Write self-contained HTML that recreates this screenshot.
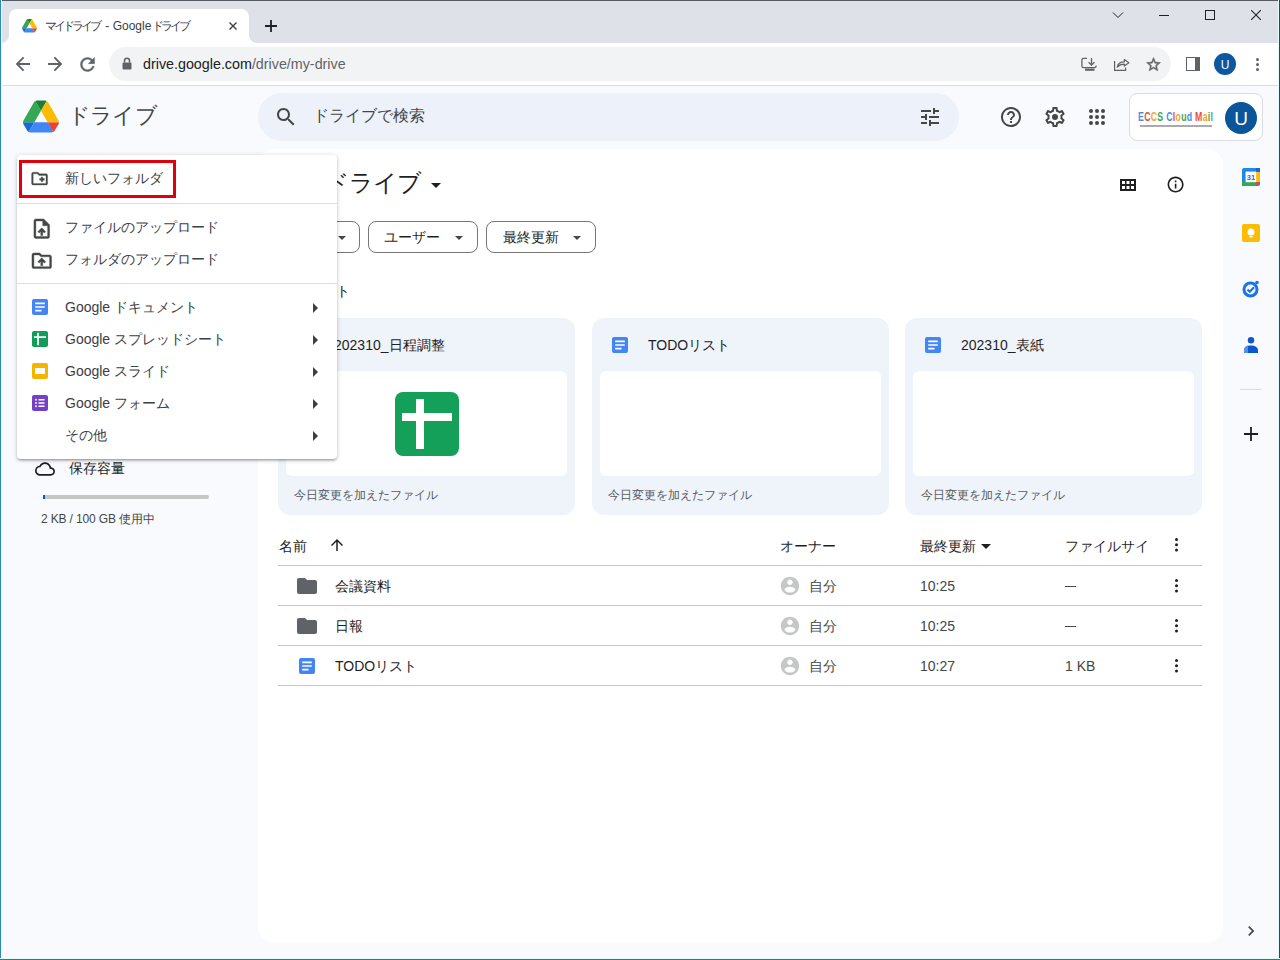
<!DOCTYPE html>
<html lang="ja"><head><meta charset="utf-8">
<style>
*{box-sizing:border-box;margin:0;padding:0}
html,body{width:1280px;height:960px;overflow:hidden;background:#f8fafd;font-family:"Liberation Sans",sans-serif;color:#1f1f1f}
.a{position:absolute}
svg{display:block;position:absolute}
.t{position:absolute;white-space:nowrap;line-height:1}
#tabstrip{left:0;top:0;width:1280px;height:43px;background:#dee1e8}
#tab{left:9px;top:9px;width:240px;height:34px;background:#fff;border-radius:8px 8px 0 0}
#toolbar{left:0;top:43px;width:1280px;height:42px;background:#fff}
#tbline{left:0;top:85px;width:1280px;height:1px;background:#dadce0}
#omni{left:109px;top:47px;width:1062px;height:34px;border-radius:17px;background:#f1f3f4}
#bl{left:0;top:0;width:1px;height:960px;background:#2a8db0;box-shadow:1px 0 0 #e4fcfd}
#br{left:1279px;top:0;width:1px;height:960px;background:#13489a;box-shadow:-1px 0 0 #e4fcfd}
#bb{left:0;top:959px;width:1280px;height:1px;background:#1b7ea6;box-shadow:0 -1px 0 #e0fdfd}
#bt{left:0;top:0;width:1280px;height:1px;background:#555a60}
#main{left:258px;top:149px;width:965px;height:794px;background:#fff;border-radius:16px}
#search{left:258px;top:93px;width:701px;height:48px;border-radius:24px;background:#ecf1fa}
.card{position:absolute;top:318px;width:297px;height:197px;background:#eff3fa;border-radius:12px}
.prev{position:absolute;left:8px;top:53px;right:8px;height:105px;background:#fff;border-radius:6px}
.chip{position:absolute;top:221px;height:32px;border:1px solid #747775;border-radius:8px;background:#fff}
.hl{position:absolute;left:278px;width:924px;height:1px;background:#c7c7c7}
#menu{left:17px;top:155px;width:320px;height:304px;background:#fff;border-radius:4px;box-shadow:0 2px 2px 0 rgba(0,0,0,.14),0 3px 1px -2px rgba(0,0,0,.12),0 1px 5px 0 rgba(0,0,0,.2)}
.mdiv{position:absolute;left:0;width:320px;height:1px;background:#dadce0}
.mt{position:absolute;left:48px;font-size:14px;color:#3c4043;white-space:nowrap;line-height:1}
.arr{position:absolute;left:296px;width:0;height:0;border-top:5px solid transparent;border-bottom:5px solid transparent;border-left:5px solid #3c4043}
</style></head><body>
<!-- browser chrome -->
<div class="a" id="tabstrip"></div>
<div class="a" id="tab"></div>
<div class="a" style="left:249px;top:35px;width:8px;height:8px;background:radial-gradient(circle at 100% 0,#dee1e8 7.5px,#fff 8.5px)"></div>
<div class="a" style="left:1px;top:35px;width:8px;height:8px;background:radial-gradient(circle at 0 0,#dee1e8 7.5px,#fff 8.5px)"></div>
<div class="a" id="toolbar"></div>
<div class="a" id="tbline"></div>
<div class="a" id="omni"></div>

<!-- tab favicon -->
<svg style="left:21.5px;top:19px" width="15" height="13.5" viewBox="0 0 87.3 78"><path d="m6.6 66.85 3.85 6.65c.8 1.4 1.95 2.5 3.3 3.3l13.75-23.8h-27.5c0 1.550.4 3.1 1.2 4.5z" fill="#1967d2"/><path d="m43.65 25-13.75-23.8c-1.35.8-2.5 1.9-3.3 3.3l-25.4 44a9.06 9.06 0 0 0 -1.2 4.5h27.5z" fill="#34a853"/><path d="m73.55 76.8c1.35-.8 2.5-1.9 3.3-3.3l1.6-2.75 7.65-13.25c.8-1.4 1.2-2.95 1.2-4.5h-27.502l5.852 11.5z" fill="#ea4335"/><path d="m43.65 25 13.75-23.8c-1.35-.8-2.9-1.2-4.5-1.2h-18.5c-1.6 0-3.15.45-4.5 1.2z" fill="#188038"/><path d="m59.8 53h-32.3l-13.75 23.8c1.35.8 2.9 1.2 4.5 1.2h50.8c1.6 0 3.150-.45 4.5-1.2z" fill="#4285f4"/><path d="m73.4 26.5-12.7-22c-.8-1.4-1.95-2.5-3.3-3.3l-13.75 23.8 16.15 28h27.45c0-1.55-.4-3.1-1.2-4.5z" fill="#fbbc04"/></svg>
<div class="t" id="tabtitle" style="left:45px;top:20px;font-size:12px;color:#3c4043"><span style="letter-spacing:-3px">マイドライ</span>ブ - Google<span style="margin-left:1px;letter-spacing:-3px">ドライブ</span></div>
<svg style="left:229px;top:22px" width="8" height="8" viewBox="0 0 8 8"><path d="M0.5 0.5L7.5 7.5M7.5 0.5L0.5 7.5" stroke="#3c4043" stroke-width="1.4"/></svg>
<svg style="left:265px;top:20px" width="12" height="12" viewBox="0 0 12 12"><path d="M6 0V12M0 6H12" stroke="#202124" stroke-width="1.8"/></svg>
<!-- window controls -->
<svg style="left:1112px;top:11px" width="12" height="8" viewBox="0 0 12 8"><path d="M1 1.5L6 6.5L11 1.5" stroke="#202124" stroke-width="1" fill="none"/></svg>
<div class="a" style="left:1159px;top:15px;width:10px;height:1px;background:#202124"></div>
<div class="a" style="left:1205px;top:10px;width:10px;height:10px;border:1px solid #202124"></div>
<svg style="left:1251px;top:10px" width="10" height="10" viewBox="0 0 10 10"><path d="M0 0L10 10M10 0L0 10" stroke="#202124" stroke-width="1.1"/></svg>
<!-- nav -->
<svg style="left:0;top:43px" width="40" height="42" viewBox="0 43 40 42"><path d="M30 64H17.5M23.6 57.4L17 64l6.6 6.6" stroke="#5f6368" stroke-width="1.9" fill="none"/></svg>
<svg style="left:40px;top:43px" width="30" height="42" viewBox="40 43 30 42"><path d="M48 64H60.5M54.4 57.4L61 64l-6.6 6.6" stroke="#5f6368" stroke-width="1.9" fill="none"/></svg>
<svg style="left:76.5px;top:54px" width="21" height="21" viewBox="0 0 24 24"><path fill="#5f6368" stroke="#5f6368" stroke-width="0.5" d="M17.65 6.35C16.2 4.9 14.21 4 12 4c-4.42 0-7.99 3.58-7.99 8s3.570 8 7.99 8c3.73 0 6.84-2.55 7.73-6h-2.08c-.82 2.33-3.04 4-5.65 4-3.31 0-6-2.69-6-6s2.69-6 6-6c1.66 0 3.14.69 4.22 1.78L13 11h7V4l-2.35 2.35z"/></svg>
<!-- lock -->
<svg style="left:122px;top:57px" width="10" height="13" viewBox="0 0 10 13"><path d="M2.5 5.5V3.8a2.5 2.5 0 0 1 5 0V5.5" stroke="#5f6368" stroke-width="1.5" fill="none"/><rect x="0.5" y="5.5" width="9" height="7" rx="1" fill="#5f6368"/></svg>
<div class="t" style="left:143px;top:57px;font-size:14.3px;color:#202124">drive.google.com<span style="color:#5f6368">/drive/my-drive</span></div>
<!-- right toolbar icons -->
<svg style="left:1075px;top:50px" width="30" height="28" viewBox="1075 50 30 28"><path d="M1087 58.3H1083.5a1.6 1.6 0 0 0-1.6 1.6V66a1.6 1.6 0 0 0 1.6 1.6H1094.5a1.6 1.6 0 0 0 1.6-1.6V65.5" stroke="#5f6368" stroke-width="1.3" fill="none"/><path d="M1091.5 58V65M1088.6 62.2L1091.5 65.1L1094.4 62.2" stroke="#5f6368" stroke-width="1.3" fill="none"/><rect x="1085" y="68.6" width="9.5" height="2.2" fill="#5f6368"/></svg>
<svg style="left:1105px;top:50px" width="30" height="28" viewBox="1105 50 30 28"><path d="M1114.6 61V70.4H1125.6V67.5" stroke="#5f6368" stroke-width="1.2" fill="none"/><path d="M1117.3 67.2C1117.8 63.5 1120.6 61.8 1124.3 61.8V59.5L1128.9 62.8L1124.3 66.1V64.2C1121.4 64.2 1119 65.3 1117.3 67.2Z" stroke="#5f6368" stroke-width="1.2" fill="none" stroke-linejoin="round"/></svg>
<svg style="left:1144.6px;top:56px" width="17" height="17" viewBox="0 0 24 24"><path fill="#5f6368" stroke="#5f6368" stroke-width="0.6" d="M22 9.24l-7.19-.62L12 2 9.19 8.63 2 9.24l5.46 4.73L5.82 21 12 17.27 18.18 21l-1.63-7.03L22 9.24zM12 15.4l-3.76 2.27 1-4.28-3.32-2.88 4.38-.38L12 6.1l1.71 4.04 4.38.38-3.32 2.88 1 4.28L12 15.4z"/></svg>
<div class="a" style="left:1186px;top:57px;width:14px;height:14px;border:1.7px solid #5f6368;border-right:5px solid #5f6368"></div>
<div class="a" style="left:1214px;top:53px;width:22px;height:22px;border-radius:50%;background:#0b57a0"></div>
<div class="t" style="left:1214px;top:59px;width:22px;text-align:center;font-size:12px;color:#fff">U</div>
<div class="a" style="left:1256px;top:58px;width:3.2px;height:3.2px;border-radius:50%;background:#5f6368"></div>
<div class="a" style="left:1256px;top:63px;width:3.2px;height:3.2px;border-radius:50%;background:#5f6368"></div>
<div class="a" style="left:1256px;top:68px;width:3.2px;height:3.2px;border-radius:50%;background:#5f6368"></div>

<!-- drive app -->

<!-- drive logo -->
<svg style="left:23px;top:100px" width="36" height="33" viewBox="0 0 87.3 78"><path d="m6.6 66.85 3.85 6.65c.8 1.4 1.95 2.5 3.3 3.3l13.75-23.8h-27.5c0 1.550.4 3.1 1.2 4.5z" fill="#1967d2"/><path d="m43.65 25-13.75-23.8c-1.35.8-2.5 1.9-3.3 3.3l-25.4 44a9.06 9.06 0 0 0 -1.2 4.5h27.5z" fill="#34a853"/><path d="m73.55 76.8c1.35-.8 2.5-1.9 3.3-3.3l1.6-2.75 7.65-13.25c.8-1.4 1.2-2.95 1.2-4.5h-27.502l5.852 11.5z" fill="#ea4335"/><path d="m43.65 25 13.75-23.8c-1.35-.8-2.9-1.2-4.5-1.2h-18.5c-1.6 0-3.15.45-4.5 1.2z" fill="#188038"/><path d="m59.8 53h-32.3l-13.75 23.8c1.35.8 2.9 1.2 4.5 1.2h50.8c1.6 0 3.150-.45 4.5-1.2z" fill="#4285f4"/><path d="m73.4 26.5-12.7-22c-.8-1.4-1.95-2.5-3.3-3.3l-13.75 23.8 16.15 28h27.45c0-1.55-.4-3.1-1.2-4.5z" fill="#fbbc04"/></svg>
<div class="t" style="left:68px;top:105px;font-size:22px;color:#444746;letter-spacing:-0.8px">ドライブ</div>
<div class="a" id="search"></div>
<svg style="left:274px;top:105px" width="24" height="24" viewBox="0 0 24 24"><path fill="#444746" d="M15.5 14h-.79l-.28-.27C15.41 12.59 16 11.11 16 9.5 16 5.91 13.09 3 9.5 3S3 5.910 3 9.5 5.91 16 9.5 16c1.61 0 3.09-.59 4.23-1.57l.27.28v.79l5 4.99L20.49 19l-4.99-5zm-6 0C7.01 14 5 11.99 5 9.5S7.01 5 9.5 5 14 7.01 14 9.5 11.99 14 9.5 14z"/></svg>
<div class="t" style="left:313px;top:108px;font-size:16px;color:#444746">ドライブで検索</div>
<svg style="left:918px;top:105px" width="24" height="24" viewBox="0 0 24 24"><path fill="#444746" d="M3 17v2h6v-2H3zM3 5v2h10V5H3zm10 16v-2h8v-2h-8v-2h-2v6h2zM7 9v2H3v2h4v2h2V9H7zm14 4v-2H11v2h10zm-6-4h2V7h4V5h-4V3h-2v6z"/></svg>
<svg style="left:999px;top:105px" width="24" height="24" viewBox="0 0 24 24"><path fill="#444746" d="M11 18h2v-2h-2v2zm1-16C6.48 2 2 6.48 2 12s4.48 10 10 10 10-4.48 10-10S17.52 2 12 2zm0 18c-4.41 0-8-3.59-8-8s3.59-8 8-8 8 3.59 8 8-3.59 8-8 8zm0-14c-2.21 0-4 1.79-4 4h2c0-1.1.9-2 2-2s2 .9 2 2c0 2-3 1.75-3 5h2c0-2.25 3-2.5 3-5 0-2.21-1.79-4-4-4z"/></svg>
<svg style="left:1043px;top:105px" width="24" height="24" viewBox="0 0 24 24"><path fill="#444746" d="M19.43 12.98c.04-.32.07-.64.07-.98 0-.34-.03-.66-.07-.98l2.11-1.65c.19-.15.24-.42.12-.64l-2-3.46c-.09-.16-.26-.25-.44-.25-.06 0-.12.01-.17.03l-2.49 1c-.52-.4-1.08-.73-1.69-.98l-.38-2.65C14.46 2.18 14.25 2 14 2h-4c-.25 0-.46.18-.49.42l-.38 2.65c-.61.25-1.17.59-1.690.98l-2.49-1c-.06-.02-.12-.03-.18-.03-.17 0-.34.09-.43.25l-2 3.46c-.13.22-.07.49.12.64l2.11 1.65c-.04.32-.07.65-.07.98 0 .33.03.66.07.98l-2.11 1.65c-.19.15-.24.42-.12.64l2 3.46c.09.16.26.25.44.25.06 0 .12-.01.17-.03l2.49-1c.52.4 1.08.73 1.69.98l.38 2.65c.03.24.24.42.49.42h4c.25 0 .46-.18.49-.42l.38-2.65c.61-.25 1.17-.59 1.69-.98l2.49 1c.06.02.12.03.18.03.17 0 .34-.09.43-.25l2-3.46c.12-.22.07-.49-.12-.64l-2.11-1.65zm-1.98-1.71c.04.31.05.52.05.73 0 .21-.02.43-.05.73l-.14 1.13.89.7 1.08.84-.7 1.21-1.27-.51-1.04-.42-.9.68c-.43.32-.84.56-1.25.73l-1.06.43-.16 1.13-.2 1.35h-1.4l-.19-1.35-.16-1.13-1.06-.43c-.43-.18-.83-.41-1.23-.71l-.91-.7-1.06.43-1.27.51-.7-1.21 1.08-.84.89-.7-.14-1.13c-.03-.31-.05-.54-.05-.74s.02-.43.05-.73l.14-1.13-.89-.7-1.08-.84.7-1.21 1.27.51 1.04.42.9-.68c.43-.32.84-.56 1.25-.73l1.06-.43.16-1.13.2-1.35h1.39l.19 1.35.16 1.13 1.06.43c.43.18.83.41 1.23.71l.91.7 1.06-.43 1.27-.51.7 1.21-1.07.85-.89.7.14 1.13z"/><circle cx="12" cy="12" r="3" fill="#444746"/></svg>
<svg style="left:1089px;top:109px" width="16" height="16" viewBox="0 0 16 16" fill="#444746"><circle cx="2" cy="2" r="2"/><circle cx="8" cy="2" r="2"/><circle cx="14" cy="2" r="2"/><circle cx="2" cy="8" r="2"/><circle cx="8" cy="8" r="2"/><circle cx="14" cy="8" r="2"/><circle cx="2" cy="14" r="2"/><circle cx="8" cy="14" r="2"/><circle cx="14" cy="14" r="2"/></svg>
<!-- ECCS box -->
<div class="a" style="left:1129px;top:93px;width:134px;height:48px;border:1px solid #dadce0;border-radius:8px;background:#fff"></div>
<div class="t" style="left:1138px;top:111px;font-size:12.5px;font-weight:bold;letter-spacing:0.4px;transform:scaleX(0.7);transform-origin:0 0"><span style="color:#4a90e2">E</span><span style="color:#e94e3c">C</span><span style="color:#f5a623">C</span><span style="color:#34a853">S</span> <span style="color:#4a90e2">C</span><span style="color:#e94e3c">l</span><span style="color:#f5a623">o</span><span style="color:#34a853">u</span><span style="color:#4a90e2">d</span> <span style="color:#e94e3c">M</span><span style="color:#f5a623">a</span><span style="color:#34a853">i</span><span style="color:#4a90e2">l</span></div>
<div class="a" style="left:1140px;top:124.5px;width:72px;height:2px;background:#555;opacity:.5"></div>
<div class="a" style="left:1225px;top:102px;width:32px;height:32px;border-radius:50%;background:#0b559b"></div>
<div class="t" style="left:1225px;top:109px;width:32px;text-align:center;font-size:19px;color:#fff">U</div>
<div class="a" id="main"></div>


<!-- main heading -->
<div class="t" style="left:277px;top:171px;font-size:24px;color:#1f1f1f;letter-spacing:-1px">マイドライブ</div>
<div class="a" style="left:431px;top:183px;width:0;height:0;border-left:5px solid transparent;border-right:5px solid transparent;border-top:5px solid #1f1f1f"></div>
<svg style="left:1116px;top:173px" width="24" height="24" viewBox="0 0 24 24"><path fill="#1f1f1f" d="M4 6h16v12H4z M6 8v3h3V8z M10.5 8v3h3V8z M15 8v3h3V8z M6 13v3h3v-3z M10.5 13v3h3v-3z M15 13v3h3v-3z" fill-rule="evenodd"/></svg>
<svg style="left:1166.4px;top:175.3px" width="19.2" height="19.2" viewBox="0 0 24 24"><path fill="#1f1f1f" d="M11 7h2v2h-2zm0 4h2v6h-2zm1-9C6.48 2 2 6.48 2 12s4.48 10 10 10 10-4.48 10-10S17.52 2 12 2zm0 18c-4.41 0-8-3.59-8-8s3.59-8 8-8 8 3.59 8 8-3.59 8-8 8z"/></svg>
<!-- chips -->
<div class="chip" style="left:278px;width:82px"><div class="t" style="left:16px;top:8px;font-size:14px;color:#1f1f1f">種類</div><div class="a" style="left:59px;top:14px;border-left:4px solid transparent;border-right:4px solid transparent;border-top:4px solid #444746"></div></div>
<div class="chip" style="left:368px;width:110px"><div class="t" style="left:15px;top:8px;font-size:14px;color:#1f1f1f">ユーザー</div><div class="a" style="left:86px;top:14px;border-left:4px solid transparent;border-right:4px solid transparent;border-top:4px solid #444746"></div></div>
<div class="chip" style="left:486px;width:110px"><div class="t" style="left:16px;top:8px;font-size:14px;color:#1f1f1f">最終更新</div><div class="a" style="left:86px;top:14px;border-left:4px solid transparent;border-right:4px solid transparent;border-top:4px solid #444746"></div></div>
<div class="t" style="left:336px;top:284px;font-size:14px;color:#1f1f1f">ト</div>
<!-- cards -->
<div class="card" style="left:278px"><div class="prev"></div>
 <svg style="left:16px;top:19px" width="16" height="16" viewBox="0 0 16 16"><rect width="16" height="16" rx="2" fill="#0f9d58"/><path d="M2 6.2H14M6 1.8V14.2" stroke="#fff" stroke-width="1.8"/></svg>
 <div class="t" style="left:56px;top:20px;font-size:14px;color:#1f1f1f">202310_日程調整</div>
 <div class="a" style="left:117px;top:74px;width:64px;height:64px;border-radius:8px;background:#15a05a"></div>
 <div class="a" style="left:138px;top:81px;width:8px;height:50px;background:#fff"></div>
 <div class="a" style="left:124px;top:95px;width:50px;height:8px;background:#fff"></div>
 <div class="t" style="left:16px;top:171px;font-size:12px;color:#575b5f">今日変更を加えたファイル</div>
</div>
<div class="card" style="left:592px"><div class="prev"></div>
 <svg style="left:20px;top:19px" width="16" height="16" viewBox="0 0 16 16"><rect width="16" height="16" rx="2" fill="#4285f4"/><path d="M3.2 4.3H12.8M3.2 8H12.8M3.2 11.7H9.5" stroke="#fff" stroke-width="1.7"/></svg>
 <div class="t" style="left:56px;top:20px;font-size:14px;color:#1f1f1f">TODOリスト</div>
 <div class="t" style="left:16px;top:171px;font-size:12px;color:#575b5f">今日変更を加えたファイル</div>
</div>
<div class="card" style="left:905px"><div class="prev"></div>
 <svg style="left:20px;top:19px" width="16" height="16" viewBox="0 0 16 16"><rect width="16" height="16" rx="2" fill="#4285f4"/><path d="M3.2 4.3H12.8M3.2 8H12.8M3.2 11.7H9.5" stroke="#fff" stroke-width="1.7"/></svg>
 <div class="t" style="left:56px;top:20px;font-size:14px;color:#1f1f1f">202310_表紙</div>
 <div class="t" style="left:16px;top:171px;font-size:12px;color:#575b5f">今日変更を加えたファイル</div>
</div>
<!-- list -->
<div class="t" style="left:279px;top:539px;font-size:14px;color:#1f1f1f">名前</div>
<svg style="left:328px;top:536px" width="18" height="18" viewBox="0 0 24 24"><path fill="#1f1f1f" d="M4 12l1.41 1.41L11 7.83V20h2V7.83l5.58 5.59L20 12l-8-8-8 8z"/></svg>
<div class="t" style="left:780px;top:539px;font-size:14px;color:#1f1f1f">オーナー</div>
<div class="t" style="left:920px;top:539px;font-size:14px;color:#1f1f1f">最終更新</div>
<div class="a" style="left:981px;top:544px;border-left:5px solid transparent;border-right:5px solid transparent;border-top:5px solid #1f1f1f"></div>
<div class="t" style="left:1065px;top:539px;font-size:14px;color:#1f1f1f">ファイルサイ</div>
<div class="a" style="left:1174.5px;top:538.2px;width:3.2px;height:3.2px;border-radius:50%;background:#1f1f1f;box-shadow:0 5.25px 0 #1f1f1f,0 10.5px 0 #1f1f1f"></div>
<div class="hl" style="top:565px"></div>
<div class="hl" style="top:605px"></div>
<div class="hl" style="top:645px"></div>
<div class="hl" style="top:685px"></div>
<svg style="left:295px;top:574px" width="24" height="24" viewBox="0 0 24 24"><path fill="#5f6368" d="M10 4H4c-1.1 0-1.99.9-1.99 2L2 18c0 1.1.9 2 2 2h16c1.1 0 2-.9 2-2V8c0-1.1-.9-2-2-2h-8l-2-2z"/></svg>
<div class="t" style="left:335px;top:579px;font-size:14px;color:#1f1f1f">会議資料</div>
<svg style="left:779.2px;top:575.2px" width="22" height="22" viewBox="0 0 24 24"><path fill="#c4c7c5" d="M12 2C6.48 2 2 6.48 2 12s4.48 10 10 10 10-4.48 10-10S17.52 2 12 2zm0 3c1.66 0 3 1.34 3 3s-1.34 3-3 3-3-1.34-3-3 1.34-3 3-3zm0 14.2c-2.5 0-4.71-1.28-6-3.22.03-1.990 4-3.08 6-3.08 1.99 0 5.97 1.09 6 3.08-1.29 1.94-3.5 3.22-6 3.22z"/></svg>
<div class="t" style="left:809px;top:579px;font-size:14px;color:#444746">自分</div>
<div class="t" style="left:920px;top:579px;font-size:14px;color:#444746">10:25</div>
<div class="t" style="left:1065px;top:579px;font-size:14px;color:#444746"><span style="display:inline-block;width:11px;height:1.3px;background:#444746;vertical-align:middle;position:relative;top:-1px"></span></div>
<div class="a" style="left:1174.5px;top:579.1px;width:3.2px;height:3.2px;border-radius:50%;background:#1f1f1f;box-shadow:0 5.25px 0 #1f1f1f,0 10.5px 0 #1f1f1f"></div>
<svg style="left:295px;top:614px" width="24" height="24" viewBox="0 0 24 24"><path fill="#5f6368" d="M10 4H4c-1.1 0-1.99.9-1.99 2L2 18c0 1.1.9 2 2 2h16c1.1 0 2-.9 2-2V8c0-1.1-.9-2-2-2h-8l-2-2z"/></svg>
<div class="t" style="left:335px;top:619px;font-size:14px;color:#1f1f1f">日報</div>
<svg style="left:779.2px;top:615.2px" width="22" height="22" viewBox="0 0 24 24"><path fill="#c4c7c5" d="M12 2C6.48 2 2 6.48 2 12s4.48 10 10 10 10-4.48 10-10S17.52 2 12 2zm0 3c1.66 0 3 1.34 3 3s-1.34 3-3 3-3-1.34-3-3 1.34-3 3-3zm0 14.2c-2.5 0-4.71-1.28-6-3.22.03-1.990 4-3.08 6-3.08 1.99 0 5.97 1.09 6 3.08-1.29 1.94-3.5 3.22-6 3.22z"/></svg>
<div class="t" style="left:809px;top:619px;font-size:14px;color:#444746">自分</div>
<div class="t" style="left:920px;top:619px;font-size:14px;color:#444746">10:25</div>
<div class="t" style="left:1065px;top:619px;font-size:14px;color:#444746"><span style="display:inline-block;width:11px;height:1.3px;background:#444746;vertical-align:middle;position:relative;top:-1px"></span></div>
<div class="a" style="left:1174.5px;top:619.1px;width:3.2px;height:3.2px;border-radius:50%;background:#1f1f1f;box-shadow:0 5.25px 0 #1f1f1f,0 10.5px 0 #1f1f1f"></div>
<svg style="left:299px;top:658px" width="16" height="16" viewBox="0 0 16 16"><rect width="16" height="16" rx="2" fill="#4285f4"/><path d="M3.2 4.3H12.8M3.2 8H12.8M3.2 11.7H9.5" stroke="#fff" stroke-width="1.7"/></svg>
<div class="t" style="left:335px;top:659px;font-size:14px;color:#1f1f1f">TODOリスト</div>
<svg style="left:779.2px;top:655.2px" width="22" height="22" viewBox="0 0 24 24"><path fill="#c4c7c5" d="M12 2C6.48 2 2 6.48 2 12s4.48 10 10 10 10-4.48 10-10S17.52 2 12 2zm0 3c1.66 0 3 1.34 3 3s-1.34 3-3 3-3-1.34-3-3 1.34-3 3-3zm0 14.2c-2.5 0-4.71-1.28-6-3.22.03-1.990 4-3.08 6-3.08 1.99 0 5.97 1.09 6 3.08-1.29 1.94-3.5 3.22-6 3.22z"/></svg>
<div class="t" style="left:809px;top:659px;font-size:14px;color:#444746">自分</div>
<div class="t" style="left:920px;top:659px;font-size:14px;color:#444746">10:27</div>
<div class="t" style="left:1065px;top:659px;font-size:14px;color:#444746">1 KB</div>
<div class="a" style="left:1174.5px;top:659.1px;width:3.2px;height:3.2px;border-radius:50%;background:#1f1f1f;box-shadow:0 5.25px 0 #1f1f1f,0 10.5px 0 #1f1f1f"></div>

<svg style="left:35px;top:459px" width="20" height="20" viewBox="0 0 24 24"><path fill="#1f1f1f" d="M19.35 10.04C18.67 6.59 15.64 4 12 4 9.11 4 6.6 5.64 5.35 8.04 2.34 8.36 0 10.91 0 14c0 3.31 2.69 6 6 6h13c2.76 0 5-2.24 5-5 0-2.64-2.05-4.78-4.65-4.96zM19 18H6c-2.21 0-4-1.79-4-4 0-2.05 1.53-3.76 3.56-3.97l1.07-.11.5-.95C8.08 7.14 9.94 6 12 6c2.62 0 4.88 1.86 5.39 4.43l.3 1.5 1.53.11c1.56.1 2.78 1.41 2.78 2.96 0 1.65-1.35 3-3 3z"/></svg>
<div class="t" style="left:69px;top:461px;font-size:14px;color:#1f1f1f">保存容量</div>
<div class="a" style="left:43px;top:495px;width:166px;height:4px;border-radius:2px;background:#c4c7c5"></div>
<div class="a" style="left:43px;top:495px;width:1.5px;height:4px;background:#0b57d0"></div>
<div class="t" style="left:41px;top:513px;font-size:12px;color:#444746;letter-spacing:-0.15px">2 KB / 100 GB 使用中</div>
<!-- right side panel -->
<svg style="left:1242px;top:168px" width="18" height="18" viewBox="0 0 18 18"><rect x="0" y="0" width="18" height="18" rx="2" fill="#1e88e5"/><rect x="0" y="14" width="14" height="4" fill="#34a853"/><rect x="14" y="4" width="4" height="10" fill="#fbbc04"/><path d="M14 14h4l-4 4z" fill="#ea4335"/><rect x="14" y="0" width="4" height="4" fill="#1967d2"/><rect x="3.6" y="3.6" width="10.6" height="10.6" fill="#fff"/><text x="9" y="12.2" font-size="7.5" text-anchor="middle" fill="#3f63b8" font-family="Liberation Sans" font-weight="bold">31</text></svg>
<svg style="left:1242px;top:224px" width="18" height="18" viewBox="0 0 18 18"><rect width="18" height="18" rx="2" fill="#fbbc04"/><circle cx="9" cy="8" r="3.5" fill="#fff"/><rect x="7.5" y="12" width="3" height="1.5" fill="#fff"/></svg>
<svg style="left:1242px;top:280px" width="18" height="18" viewBox="0 0 18 18"><circle cx="8.5" cy="9.5" r="6.5" fill="none" stroke="#1a73e8" stroke-width="3"/><path d="M5.5 9.5l2.2 2.2L12 7.3" stroke="#1a73e8" stroke-width="2.2" fill="none"/><circle cx="15" cy="2.5" r="1.8" fill="#1a73e8"/></svg>
<svg style="left:1244px;top:337px" width="14" height="16" viewBox="0 0 14 16"><circle cx="7" cy="3.3" r="3.2" fill="#0b57d0"/><path d="M0 13.5C0 10 3 8.5 7 8.5S14 10 14 13.5V16H0z" fill="#0b57d0"/><path d="M0 13.5C0 10 3 8.5 4 8.6V16H0z" fill="#5b8ee6"/></svg>
<div class="a" style="left:1240px;top:389px;width:21px;height:1px;background:#dadce0"></div>
<svg style="left:1243px;top:426px" width="16" height="16" viewBox="0 0 16 16"><path d="M8 1V15M1 8H15" stroke="#1f1f1f" stroke-width="1.8"/></svg>
<svg style="left:1241px;top:921px" width="20" height="20" viewBox="0 0 24 24"><path fill="#444746" d="M10 6L8.59 7.41 13.17 12l-4.58 4.59L10 18l6-6z"/></svg>
<div class="a" id="menu">
  <svg style="left:13.3px;top:13.8px" width="19.2" height="19.2" viewBox="0 0 24 24"><path fill="#444746" stroke="#444746" stroke-width="0.4" d="M20 6h-8l-2-2H4c-1.11 0-1.99.89-1.99 2L2 18c0 1.11.89 2 2 2h16c1.11 0 2-.89 2-2V8c0-1.11-.89-2-2-2zm0 12H4V6h5.17l2 2H20v10zm-8-4h2v2h2v-2h2v-2h-2v-2h-2v2h-2z"/></svg>
  <div class="mt" style="top:16px">新しいフォルダ</div>
  <div class="mdiv" style="top:48px"></div>
  <svg style="left:13px;top:62px" width="23.5" height="23.5" viewBox="0 0 24 24"><path fill="#444746" stroke="#444746" stroke-width="0.4" d="M14 2H6c-1.1 0-1.99.9-1.99 2L4 20c0 1.1.89 2 1.99 2H18c1.1 0 2-.9 2-2V8l-6-6zm4 18H6V4h7v5h5v11zM8 15.01l1.41 1.41L11 14.84V19h2v-4.16l1.59 1.59L16 15.01 12.01 11 8 15.01z"/></svg>
  <div class="mt" style="top:65px">ファイルのアップロード</div>
  <svg style="left:13px;top:94px" width="23.5" height="23.5" viewBox="0 0 24 24"><path fill="#444746" stroke="#444746" stroke-width="0.4" d="M20 6h-8l-2-2H4c-1.1 0-1.99.9-1.99 2L2 18c0 1.1.9 2 2 2h16c1.1 0 2-.9 2-2V8c0-1.1-.9-2-2-2zm0 12H4V6h5.17l2 2H20v10zM9.41 14.42L11 12.84V17h2v-4.16l1.59 1.59L16 13.01 12.01 9 8 13.01l1.41 1.41z"/></svg>
  <div class="mt" style="top:97px">フォルダのアップロード</div>
  <div class="mdiv" style="top:128px"></div>
  <svg style="left:15px;top:144px" width="16" height="16" viewBox="0 0 16 16"><rect width="16" height="16" rx="2" fill="#4285f4"/><path d="M3.2 4.3H12.8M3.2 8H12.8M3.2 11.7H9.5" stroke="#fff" stroke-width="1.7"/></svg>
  <div class="mt" style="top:145px">Google ドキュメント</div><div class="arr" style="top:148px"></div>
  <svg style="left:15px;top:176px" width="16" height="16" viewBox="0 0 16 16"><rect width="16" height="16" rx="2" fill="#0f9d58"/><path d="M2 6.2H14M6 1.8V14.2" stroke="#fff" stroke-width="1.8"/></svg>
  <div class="mt" style="top:177px">Google スプレッドシート</div><div class="arr" style="top:180px"></div>
  <svg style="left:15px;top:208px" width="16" height="16" viewBox="0 0 16 16"><rect width="16" height="16" rx="2" fill="#f4b400"/><rect x="3" y="5" width="10" height="6" fill="#fff"/></svg>
  <div class="mt" style="top:209px">Google スライド</div><div class="arr" style="top:212px"></div>
  <svg style="left:15px;top:240px" width="16" height="16" viewBox="0 0 16 16"><rect width="16" height="16" rx="2" fill="#7540c4"/><path d="M6.5 4.75H12.5M6.5 8H12.5M6.5 11.25H12.5" stroke="#fff" stroke-width="1.5"/><circle cx="4" cy="4.75" r=".9" fill="#fff"/><circle cx="4" cy="8" r=".9" fill="#fff"/><circle cx="4" cy="11.25" r=".9" fill="#fff"/></svg>
  <div class="mt" style="top:241px">Google フォーム</div><div class="arr" style="top:244px"></div>
  <div class="mt" style="top:273px">その他</div><div class="arr" style="top:276px"></div>
</div>
<div class="a" style="left:19px;top:160px;width:157px;height:38px;border:3px solid #e0000b"></div>

<div class="a" id="bt"></div><div class="a" id="bl"></div><div class="a" id="br"></div><div class="a" id="bb"></div>
</body></html>
